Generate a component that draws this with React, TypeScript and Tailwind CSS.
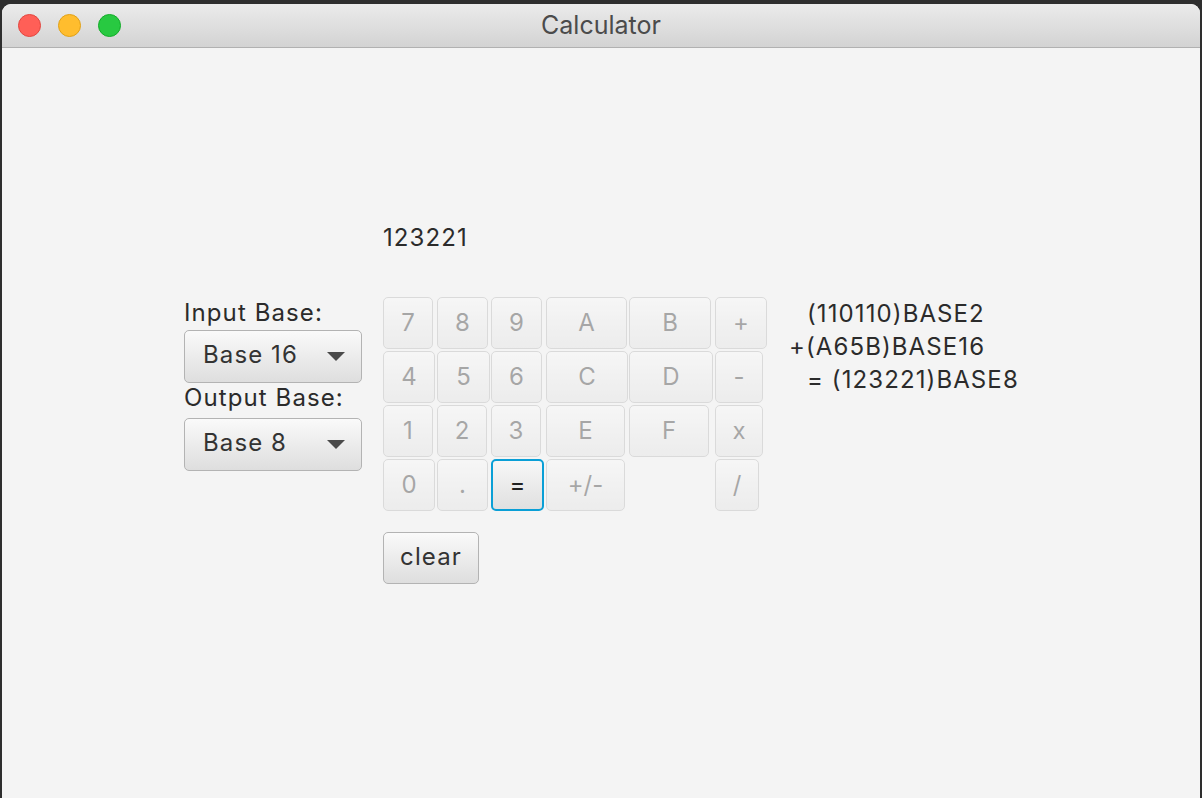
import React from "react";

type Btn = { label: string; w: number; enabled?: boolean; focused?: boolean } | null;

const rows: Btn[][] = [
  [
    { label: "7", w: 50 },
    { label: "8", w: 51 },
    { label: "9", w: 51 },
    { label: "A", w: 81 },
    { label: "B", w: 82 },
    { label: "+", w: 52 },
  ],
  [
    { label: "4", w: 52 },
    { label: "5", w: 53 },
    { label: "6", w: 51 },
    { label: "C", w: 82 },
    { label: "D", w: 84 },
    { label: "-", w: 48 },
  ],
  [
    { label: "1", w: 50 },
    { label: "2", w: 50 },
    { label: "3", w: 50 },
    { label: "E", w: 79 },
    { label: "F", w: 80 },
    { label: "x", w: 48 },
  ],
  [
    { label: "0", w: 52 },
    { label: ".", w: 51 },
    { label: "=", w: 53, enabled: true, focused: true },
    { label: "+/-", w: 79 },
    null,
    { label: "/", w: 44 },
  ],
];

function Combo({ text }: { text: string }) {
  return (
    <div className="flex h-[53px] w-[178px] items-center justify-between rounded-[5px] border border-[#b3b3b3] bg-gradient-to-b from-[#fafafa] to-[#dedede] pl-[18px] pr-[16px] text-[#333]">
      <span className="-mt-[4px]">{text}</span>
      <svg width="18" height="9" viewBox="0 0 18 9">
        <polygon points="0,0 18,0 9,9" fill="#4a4a4a" />
      </svg>
    </div>
  );
}

export default function App() {
  return (
    <div
      className="flex h-[798px] w-[1202px] bg-[#2e2e2e] pl-[2px] pr-[2px] pt-[4px] text-[24px]"
      style={{ fontFamily: "Inter, 'Liberation Sans', sans-serif" }}
    >
      <div className="flex flex-1 flex-col overflow-hidden rounded-t-[9px] bg-[#f4f4f4]">
        {/* Title bar */}
        <div className="relative flex h-[44px] items-center justify-center border-b border-[#b1b1b1] bg-gradient-to-b from-[#ebebeb] to-[#d3d3d3]">
          <div className="absolute left-[16px] top-[10px] flex gap-[17px]">
            <div className="h-[23px] w-[23px] rounded-full border border-[#e2463f] bg-[#ff5f57]" />
            <div className="h-[23px] w-[23px] rounded-full border border-[#e1a116] bg-[#ffbd2e]" />
            <div className="h-[23px] w-[23px] rounded-full border border-[#12ac28] bg-[#28c941]" />
          </div>
          <span className="text-[25px] text-[#4b4b4b]">Calculator</span>
        </div>

        {/* Content */}
        <div className="flex flex-1 items-start pl-[182px] pt-[176px] tracking-[1.1px] text-[#2b2b2b]">
          {/* Left column */}
          <div className="mt-[75px] flex w-[178px] flex-col">
            <div className="h-[28px] whitespace-nowrap leading-[28px]">Input Base:</div>
            <div className="mt-[3px]">
              <Combo text="Base 16" />
            </div>
            <div className="mt-[1px] h-[28px] whitespace-nowrap leading-[28px]">Output Base:</div>
            <div className="mt-[6px]">
              <Combo text="Base 8" />
            </div>
          </div>

          {/* Middle column */}
          <div className="ml-[21px] flex flex-col">
            <div className="h-[28px] leading-[28px]">123221</div>
            <div className="mt-[45px] grid grid-cols-[52px_52px_53px_81px_84px_52px] gap-[2px] tracking-normal">
              {rows.flat().map((b, i) =>
                b === null ? (
                  <div key={i} />
                ) : b.focused ? (
                  <div
                    key={i}
                    style={{ width: b.w }}
                    className="flex h-[52px] items-center justify-center rounded-[5px] border-2 border-[#0a9fd6] bg-gradient-to-b from-[#f7f7f7] to-[#e0e0e0] text-[#222]"
                  >
                    {b.label}
                  </div>
                ) : (
                  <div
                    key={i}
                    style={{ width: b.w }}
                    className="flex h-[52px] items-center justify-center rounded-[5px] border border-[#b5b5b5] bg-gradient-to-b from-[#fafafa] to-[#e2e2e2] text-[#333] opacity-40"
                  >
                    {b.label}
                  </div>
                )
              )}
            </div>
            <div className="mt-[21px] flex h-[52px] w-[96px] items-center justify-center rounded-[5px] border border-[#b3b3b3] bg-gradient-to-b from-[#fafafa] to-[#dedede] text-[#333]">
              <span className="-mt-[2px]">clear</span>
            </div>
          </div>

          {/* Right column */}
          <div className="ml-[22px] mt-[73px] flex flex-col whitespace-nowrap leading-[33px]">
            <div className="pl-[18px]">(110110)BASE2</div>
            <div>+(A65B)BASE16</div>
            <div className="pl-[18px]">= (123221)BASE8</div>
          </div>
        </div>
      </div>
    </div>
  );
}
